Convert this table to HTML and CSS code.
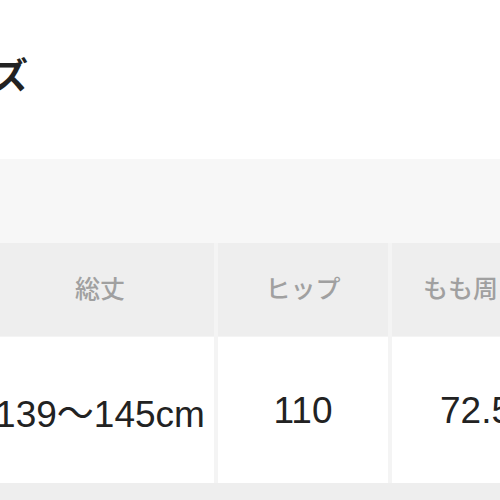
FILE: index.html
```html
<!DOCTYPE html>
<html lang="ja">
<head>
<meta charset="utf-8">
<link rel="stylesheet" href="styles.css">
</head>
<body>
<div class="page">
  <h2 class="title">サイズ</h2>
  <div class="band"></div>
  <div class="table">
    <div class="th">総丈</div>
    <div class="th">ヒップ</div>
    <div class="th">もも周り</div>
    <div class="td">139〜145cm</div>
    <div class="td">110</div>
    <div class="td">72.5</div>
  </div>
  <div class="foot"></div>
</div>
</body>
</html>
```
FILE: styles.css
```css
html, body {
  margin: 0;
  padding: 0;
  background: #ffffff;
}
.page {
  width: 500px;
  height: 500px;
  overflow: hidden;
  background: #eeeeee;
}
.title {
  margin: 0 0 0 -79px;
  height: 159px;
  box-sizing: border-box;
  padding-top: 51px;
  background: #ffffff;
  font-family: "Noto Sans CJK JP", sans-serif;
  font-size: 36px;
  font-weight: 700;
  line-height: 44px;
  color: #222222;
  white-space: nowrap;
}
.band {
  height: 84px;
  background: #f7f7f7;
}
.table {
  display: grid;
  grid-template-columns: 228px 170px 170px;
  grid-template-rows: 93px 146px;
  column-gap: 4px;
  row-gap: 1px;
  margin-left: -14px;
  width: 576px;
  background: #f4f4f4;
}
.th, .td {
  display: flex;
  align-items: center;
  justify-content: center;
  white-space: nowrap;
}
.th {
  background: #eeeeee;
  font-family: "Noto Sans CJK JP", sans-serif;
  font-size: 25px;
  font-weight: 500;
  color: #a0a0a0;
  padding-bottom: 5px;
}
.th:nth-child(3) {
  justify-content: flex-start;
  padding-left: 31px;
}
.td {
  background: #ffffff;
  font-family: "Liberation Sans", "Noto Sans CJK JP", sans-serif;
  font-size: 37px;
  font-weight: 400;
  color: #222222;
  padding-top: 2px;
}
.td:nth-child(6) {
  justify-content: flex-start;
  padding-left: 48px;
}
.foot {
  height: 20px;
  background: #eeeeee;
}
```
